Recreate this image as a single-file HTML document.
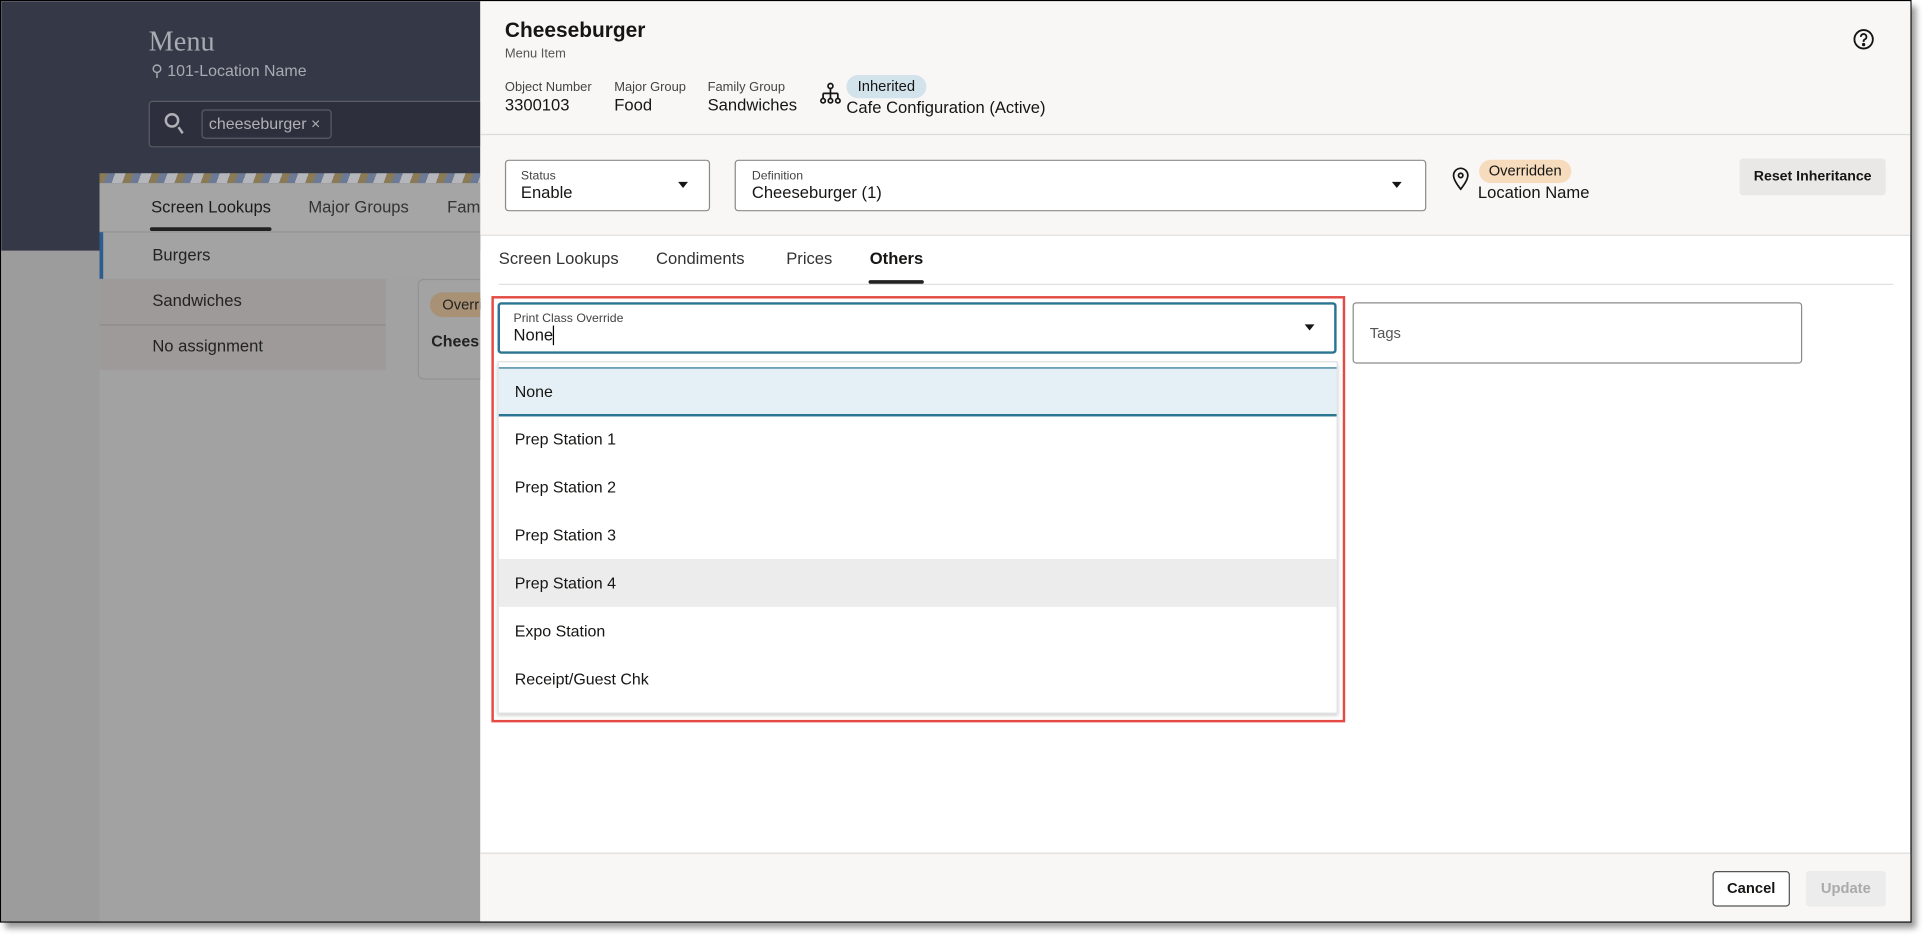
<!DOCTYPE html>
<html><head><meta charset="utf-8"><style>
*{box-sizing:border-box;margin:0;padding:0}
html,body{width:1923px;height:940px;overflow:hidden;background:#fff;font-family:"Liberation Sans",sans-serif;color:#161513}
#w{position:absolute;left:0;top:0;width:1563px;height:764px;transform:scale(1.2285);transform-origin:0 0}
.a{position:absolute}
.f{font-size:13.5px;white-space:nowrap}
.s{font-size:10.5px;color:#555;white-space:nowrap}
.box{position:absolute;border:1px solid #8c8b89;border-radius:3px;background:#fff}
.car{position:absolute;width:0;height:0;border-left:4.5px solid transparent;border-right:4.5px solid transparent;border-top:5px solid #161513}
.row{position:absolute;left:0;width:100%;height:39px;line-height:39px;padding-left:13px;font-size:13px}
</style></head><body><div id="w">
<div class="a" style="left:0;top:0;width:1556px;height:751px;border:1px solid #000;overflow:hidden;box-shadow:4px 5px 5px #999">
 <div class="a" style="left:0;top:0;width:390px;height:751px;background:#a2a2a2"></div>
 <div class="a" style="left:0;top:203px;width:80px;height:548px;background:#9c9c9c"></div>
 <div class="a" style="left:0;top:0;width:390px;height:203px;background:#353846"></div>
 <div class="a" style="left:120px;top:20px;font-family:'Liberation Serif',serif;font-size:23px;color:#a9abb3">Menu</div>
 <div class="a" style="left:122px;top:49px;font-size:13px;color:#a9abb3">&#9906; 101-Location Name</div>
 <div class="a" style="left:120px;top:81px;width:280px;height:38px;border:1px solid #5a5c66;border-radius:3px;background:#2d303c"></div>
 <div class="a" style="left:133px;top:91px;width:12px;height:12px;border:2px solid #b0b1b6;border-radius:50%"></div>
 <div class="a" style="left:143px;top:104px;width:6px;height:2px;background:#b0b1b6;transform:rotate(55deg)"></div>
 <div class="a" style="left:163px;top:88px;width:106px;height:24px;border:1px solid #5a5c66;border-radius:3px;font-size:13px;color:#b0b1b6;line-height:22px;padding-left:5px">cheeseburger ×</div>
 <div class="a" style="left:80px;top:140px;width:310px;height:8px;background:repeating-linear-gradient(110deg,#8a7a55 0 6px,#6c7a95 6px 12px,#b4b6bb 12px 20px)"></div>
 <div class="a" style="left:80px;top:148px;width:310px;height:40px;background:#a5a5a5;border-bottom:1px solid #999"></div>
 <div class="a f" style="left:122px;top:160px;color:#1b1b1b">Screen Lookups</div>
 <div class="a" style="left:121px;top:184px;width:99px;height:3px;background:#222;border-radius:2px"></div>
 <div class="a f" style="left:250px;top:160px;color:#333">Major Groups</div>
 <div class="a f" style="left:363px;top:160px;color:#333">Fami</div>
 <div class="a" style="left:80px;top:188px;width:310px;height:38px;background:#a3a3a3;border-left:3px solid #2c5d8f"></div>
 <div class="a f" style="left:123px;top:199px;color:#222">Burgers</div>
 <div class="a" style="left:80px;top:226px;width:233px;height:74px;background:#9e9a99"></div>
 <div class="a" style="left:80px;top:263px;width:233px;height:1px;background:#8e8a88"></div>
 <div class="a f" style="left:123px;top:236px;color:#222">Sandwiches</div>
 <div class="a f" style="left:123px;top:273px;color:#222">No assignment</div>
 <div class="a" style="left:339px;top:226px;width:60px;height:82px;border:1px solid #939393;border-radius:5px;background:#a3a3a3"></div>
 <div class="a" style="left:349px;top:237px;width:50px;height:20px;border-radius:10px;background:#a89175;font-size:12px;line-height:20px;padding-left:10px;color:#222">Overri</div>
 <div class="a" style="left:350px;top:269px;font-size:13px;font-weight:bold;color:#222">Chees</div>

 <div class="a" style="left:390px;top:0;width:1166px;height:751px;background:#fff">
  <div class="a" style="left:0;top:0;width:100%;height:190px;background:#f8f7f5"></div>
  <div class="a" style="left:0;top:108px;width:100%;height:1px;background:#dedcd9"></div>
  <div class="a" style="left:0;top:190px;width:100%;height:1px;background:#e2e0dd"></div>
  <div class="a" style="left:0;top:693px;width:100%;height:58px;background:#f8f7f5;border-top:1px solid #dedcd9"></div>
 </div>
 <div class="a" style="left:410px;top:14px;font-size:17px;font-weight:bold">Cheeseburger</div>
 <div class="a s" style="left:410px;top:37px">Menu Item</div>
 <div class="a s" style="left:410px;top:64px;color:#444">Object Number</div>
 <div class="a f" style="left:410px;top:77px">3300103</div>
 <div class="a s" style="left:499px;top:64px;color:#444">Major Group</div>
 <div class="a f" style="left:499px;top:77px">Food</div>
 <div class="a s" style="left:575px;top:64px;color:#444">Family Group</div>
 <div class="a f" style="left:575px;top:77px">Sandwiches</div>
 <svg class="a" style="left:666px;top:66px" width="18" height="18" viewBox="0 0 18 18" fill="none" stroke="#161513" stroke-width="1.4"><circle cx="9" cy="3" r="2"/><path d="M9 5v4M3 9h12M3 9v4M9 9v4M15 9v4"/><circle cx="3" cy="15" r="1.8"/><circle cx="9" cy="15" r="1.8"/><circle cx="15" cy="15" r="1.8"/></svg>
 <div class="a" style="left:688px;top:60px;width:65px;height:19px;border-radius:10px;background:#d2e3ec;font-size:12px;line-height:19px;text-align:center">Inherited</div>
 <div class="a f" style="left:688px;top:79px">Cafe Configuration (Active)</div>
 <svg class="a" style="left:1507px;top:22px" width="18" height="18" viewBox="0 0 18 18" fill="none" stroke="#161513" stroke-width="1.5"><circle cx="9" cy="9" r="7.5"/><path d="M6.7 7a2.3 2.3 0 1 1 3.2 2.1c-.6.3-.9.8-.9 1.4v.6"/><circle cx="9" cy="13.3" r=".6" fill="#161513"/></svg>

 <div class="box" style="left:410px;top:129px;width:167px;height:42px"></div>
 <div class="a" style="left:423px;top:137px;font-size:10px;color:#444">Status</div>
 <div class="a f" style="left:423px;top:148px">Enable</div>
 <div class="car" style="left:551px;top:147px"></div>
 <div class="box" style="left:597px;top:129px;width:563px;height:42px"></div>
 <div class="a" style="left:611px;top:137px;font-size:10px;color:#444">Definition</div>
 <div class="a f" style="left:611px;top:148px">Cheeseburger (1)</div>
 <div class="car" style="left:1132px;top:147px"></div>
 <svg class="a" style="left:1181px;top:135px" width="14" height="19" viewBox="0 0 14 19" fill="none" stroke="#161513" stroke-width="1.4"><path d="M7 18C3 13 1.2 9.8 1.2 6.8a5.8 5.8 0 0 1 11.6 0C12.8 9.8 11 13 7 18z"/><circle cx="7" cy="6.8" r="1.8"/></svg>
 <div class="a" style="left:1203px;top:129px;width:75px;height:19px;border-radius:10px;background:#f6dcbc;font-size:12px;line-height:19px;text-align:center">Overridden</div>
 <div class="a f" style="left:1202px;top:148px">Location Name</div>
 <div class="a" style="left:1415px;top:128px;width:119px;height:30px;border-radius:3px;background:#e9e8e6;font-size:11.5px;font-weight:bold;line-height:30px;text-align:center">Reset Inheritance</div>

 <div class="a f" style="left:405px;top:202px;color:#333">Screen Lookups</div>
 <div class="a f" style="left:533px;top:202px;color:#333">Condiments</div>
 <div class="a f" style="left:639px;top:202px;color:#333">Prices</div>
 <div class="a f" style="left:707px;top:202px;font-weight:bold;color:#161513">Others</div>
 <div class="a" style="left:405px;top:230px;width:1135px;height:1px;background:#e2e0dd"></div>
 <div class="a" style="left:706px;top:227px;width:45px;height:3px;background:#222;border-radius:2px"></div>

 <div class="a" style="left:399px;top:240px;width:695px;height:347px;border:2px solid #e34b44"></div>
 <div class="a" style="left:404px;top:245px;width:683px;height:42px;border:2px solid #2b7592;border-radius:3px;background:#fff"></div>
 <div class="a" style="left:417px;top:253px;font-size:10px;color:#444">Print Class Override</div>
 <div class="a f" style="left:417px;top:264px">None</div>
 <div class="a" style="left:449px;top:264px;width:1px;height:16px;background:#000"></div>
 <div class="car" style="left:1061px;top:263px"></div>
 <div class="box" style="left:1100px;top:245px;width:366px;height:50px"></div>
 <div class="a" style="left:1114px;top:263px;font-size:12px;color:#555">Tags</div>

 <div class="a" style="left:404px;top:293px;width:684px;height:287px;background:#fff;border:1px solid #e0e0e0;box-shadow:0 2px 3px #ccc">
  <div class="row" style="top:4px;height:40px;background:#e4f0f5;border-top:1px solid #2b7592;border-bottom:2px solid #2b7592;line-height:37px">None</div>
  <div class="row" style="top:43px">Prep Station 1</div>
  <div class="row" style="top:82px">Prep Station 2</div>
  <div class="row" style="top:121px">Prep Station 3</div>
  <div class="row" style="top:160px;background:#ececec">Prep Station 4</div>
  <div class="row" style="top:199px">Expo Station</div>
  <div class="row" style="top:238px">Receipt/Guest Chk</div>
 </div>

 <div class="a" style="left:1393px;top:708px;width:63px;height:29px;border:1px solid #555;border-radius:3px;background:#fff;font-size:12px;font-weight:bold;line-height:27px;text-align:center">Cancel</div>
 <div class="a" style="left:1469px;top:708px;width:65px;height:29px;border-radius:3px;background:#ececec;color:#aaa;font-size:12px;font-weight:bold;line-height:29px;text-align:center">Update</div>
</div>
</div></body></html>
